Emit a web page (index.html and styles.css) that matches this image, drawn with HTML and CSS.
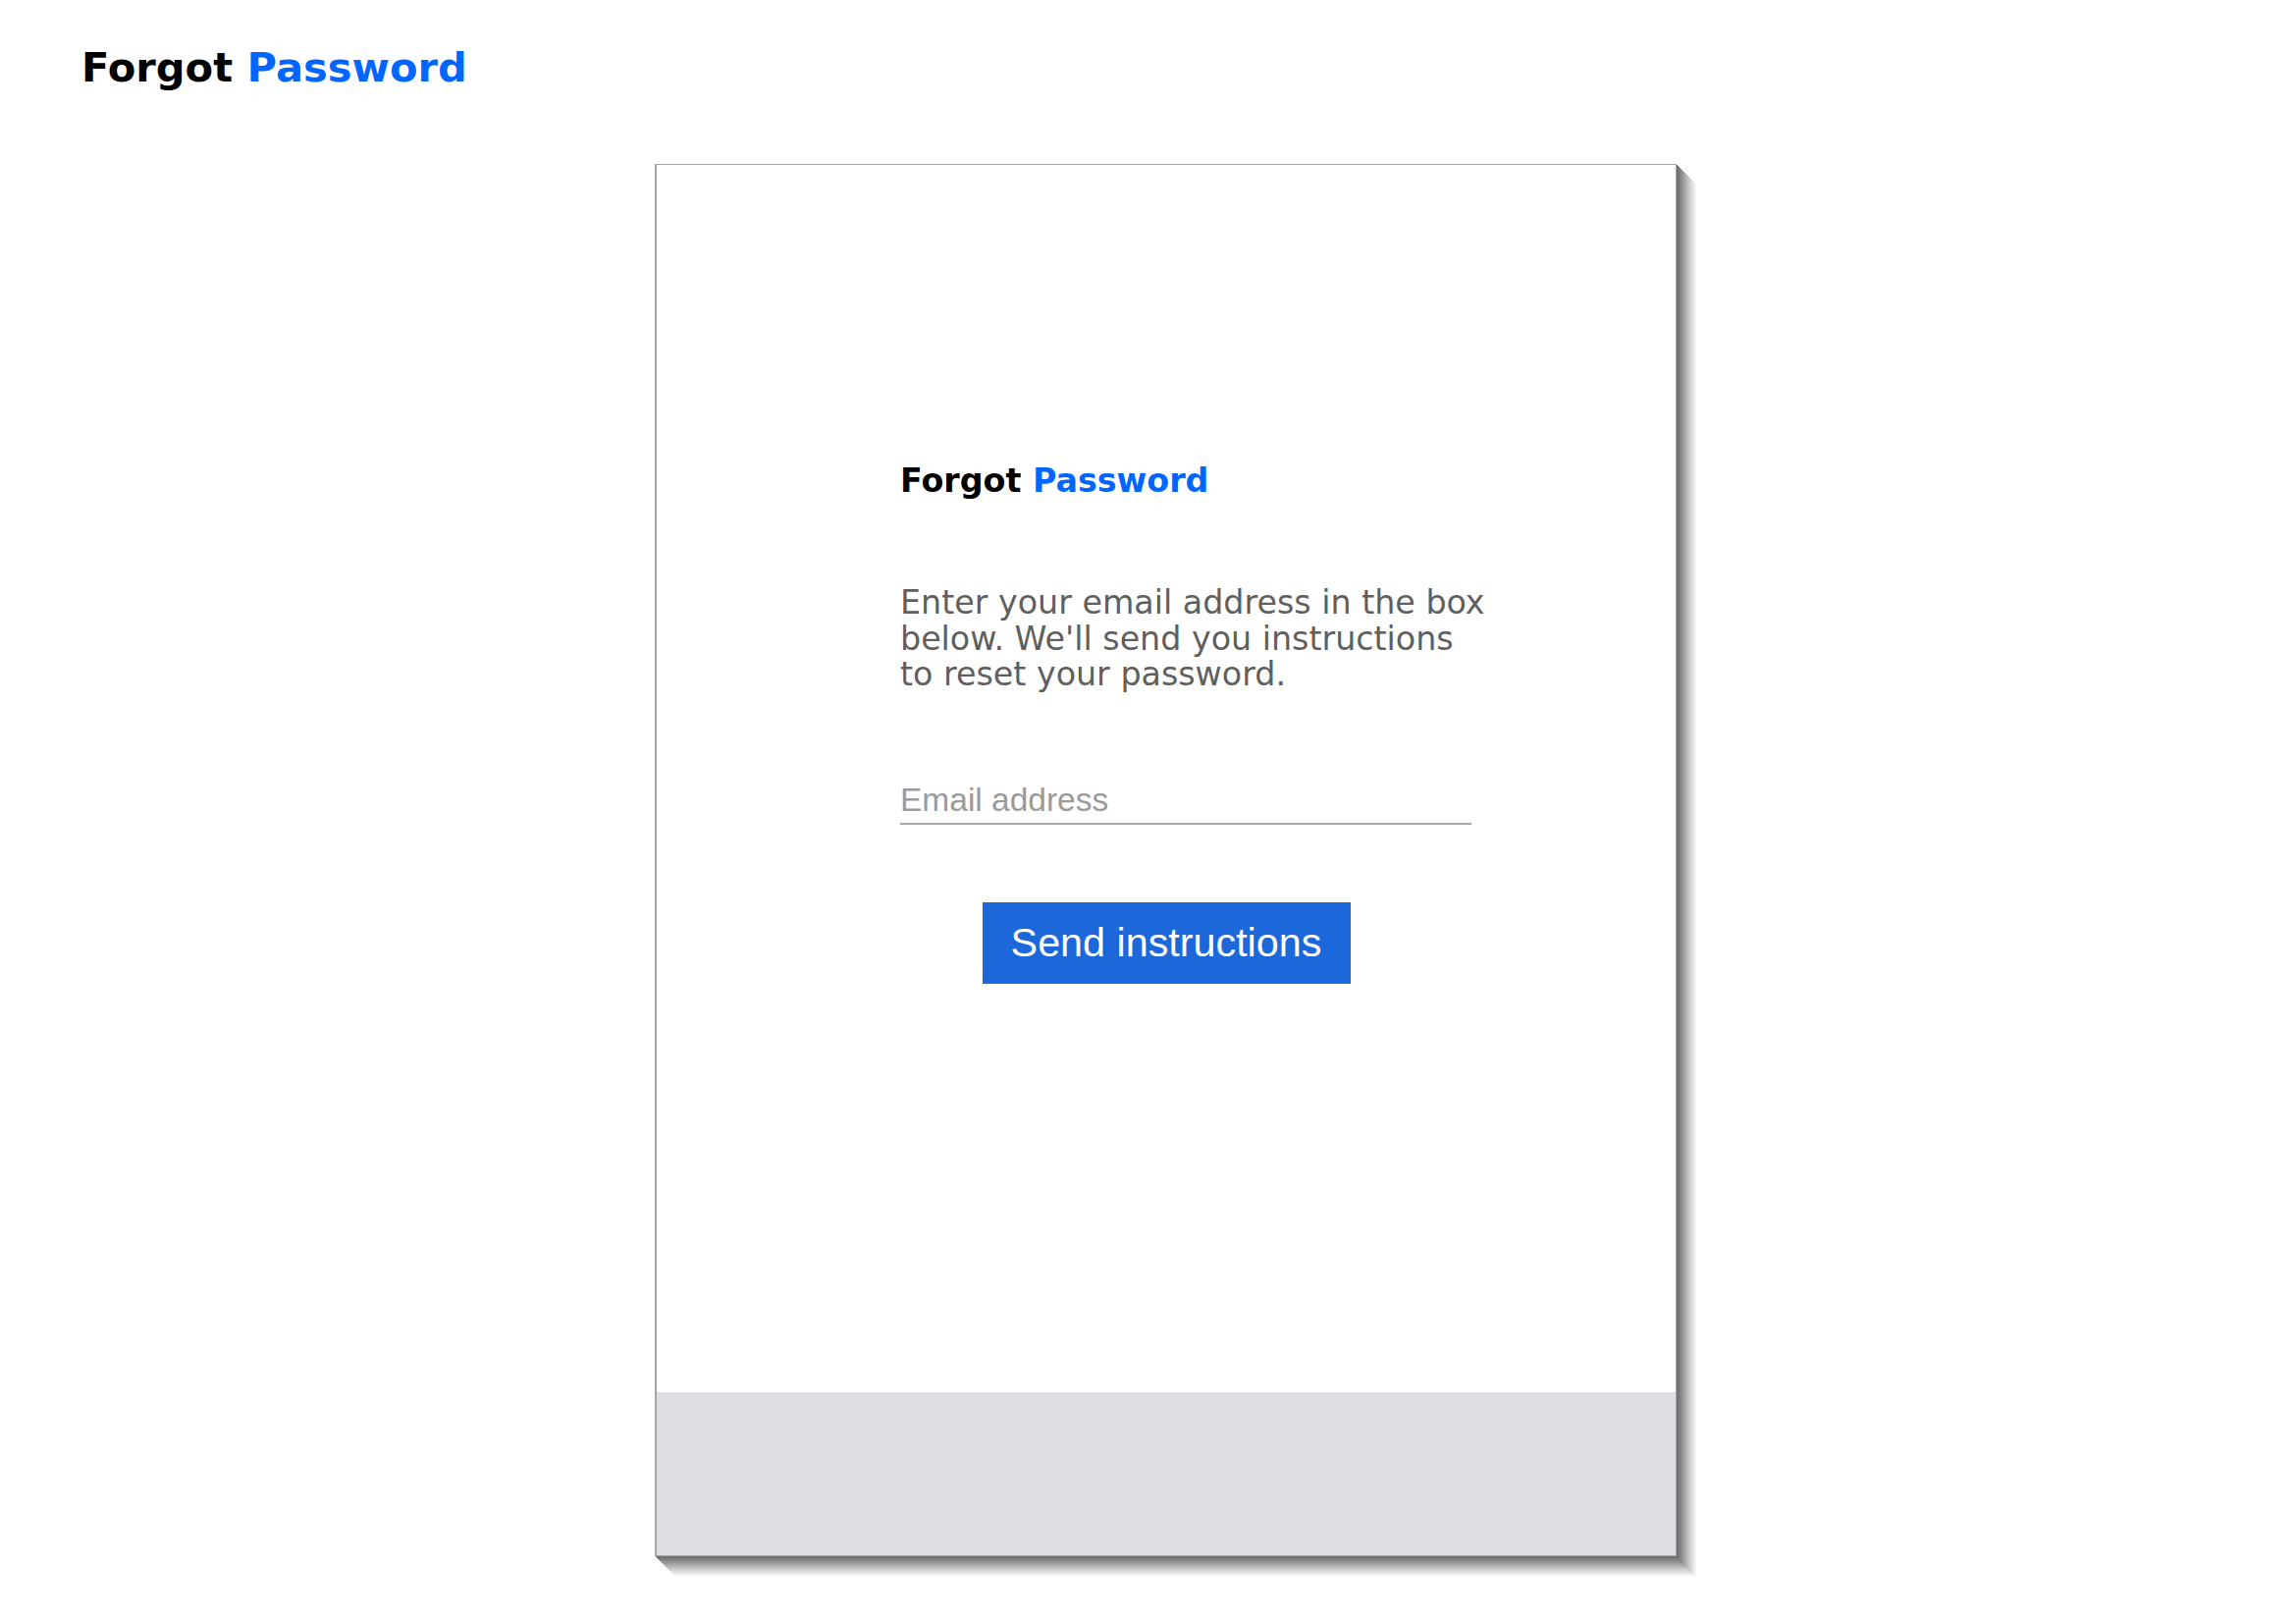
FILE: index.html
```html
<!DOCTYPE html>
<html lang="en">
<head>
<meta charset="utf-8">
<title>Forgot Password</title>
<link rel="stylesheet" href="styles.css">
</head>
<body>
<header class="page-header">
  <h1 class="page-title">Forgot <span class="accent">Password</span></h1>
</header>
<main class="card">
  <section class="card-body">
    <div class="form">
      <h2 class="form-title">Forgot <span class="accent">Password</span></h2>
      <p class="form-text">Enter your email address in the box below. We'll send you instructions to reset your password.</p>
      <input class="email" type="email" placeholder="Email address">
    </div>
    <div class="actions">
      <button class="send" type="button">Send instructions</button>
    </div>
  </section>
  <footer class="card-footer"></footer>
</main>
</body>
</html>
```

FILE: styles.css
```css
html, body {
  margin: 0;
  padding: 0;
  background: #ffffff;
}

body {
  font-family: "DejaVu Sans", "Liberation Sans", sans-serif;
  color: #000000;
  min-height: 1654px;
}

.page-header {
  padding: 45px 0 0 83px;
}

.page-title {
  margin: 0;
  font-size: 41.6px;
  line-height: 48px;
  font-weight: bold;
}

.accent {
  color: #0066ff;
}

.card {
  box-sizing: border-box;
  width: 1041px;
  height: 1418px;
  margin: 74px 0 70px 667px;
  border: 1px solid #a6a6a6;
  border-left-width: 2px;
  background: #ffffff;
  display: flex;
  flex-direction: column;
  box-shadow:
    1px 1px 0 #6e6e6e,
    2px 2px 0 #747474,
    3px 3px 0 #7a7a7a,
    4px 4px 0 #818181,
    5px 5px 0 #888888,
    6px 6px 0 #8f8f8f,
    7px 7px 0 #979797,
    8px 8px 0 #9f9f9f,
    9px 9px 0 #a7a7a7,
    10px 10px 0 #afafaf,
    11px 11px 0 #b7b7b7,
    12px 12px 0 #bfbfbf,
    13px 13px 0 #c7c7c7,
    14px 14px 0 #cecece,
    15px 15px 0 #d5d5d5,
    16px 16px 0 #dcdcdc,
    17px 17px 0 #e3e3e3,
    18px 18px 0 #e9e9e9,
    19px 19px 0 #efefef,
    20px 20px 0 #f5f5f5;
}

.card-body {
  flex: 1;
  display: flex;
  flex-direction: column;
  padding-top: 303px;
}

.form {
  display: flex;
  flex-direction: column;
  align-items: flex-start;
  padding-left: 248px;
}

.form-title {
  margin: 0;
  font-size: 33.3px;
  line-height: 38px;
  font-weight: bold;
}

.form-text {
  margin: 87px 0 0 0;
  width: 606px;
  font-size: 33.3px;
  line-height: 36.5px;
  color: #5f5f5f;
}

.email {
  box-sizing: border-box;
  margin-top: 90px;
  width: 582px;
  height: 44px;
  padding: 0 0 4px 0;
  border: none;
  border-bottom: 2px solid #a8a8a8;
  outline: none;
  background: transparent;
  font-family: "Liberation Sans", Arial, sans-serif;
  font-size: 33.5px;
  color: #333333;
}

.email::placeholder {
  color: #9a9a9a;
}

.actions {
  display: flex;
  justify-content: center;
  margin-top: 79px;
}

.send {
  width: 375px;
  height: 83px;
  padding: 0;
  border: none;
  background: #1c67d9;
  color: #ffffff;
  font-family: "Liberation Sans", Arial, sans-serif;
  font-size: 41.3px;
  cursor: pointer;
}

.card-footer {
  height: 166px;
  background: #dcdee2;
}
```
